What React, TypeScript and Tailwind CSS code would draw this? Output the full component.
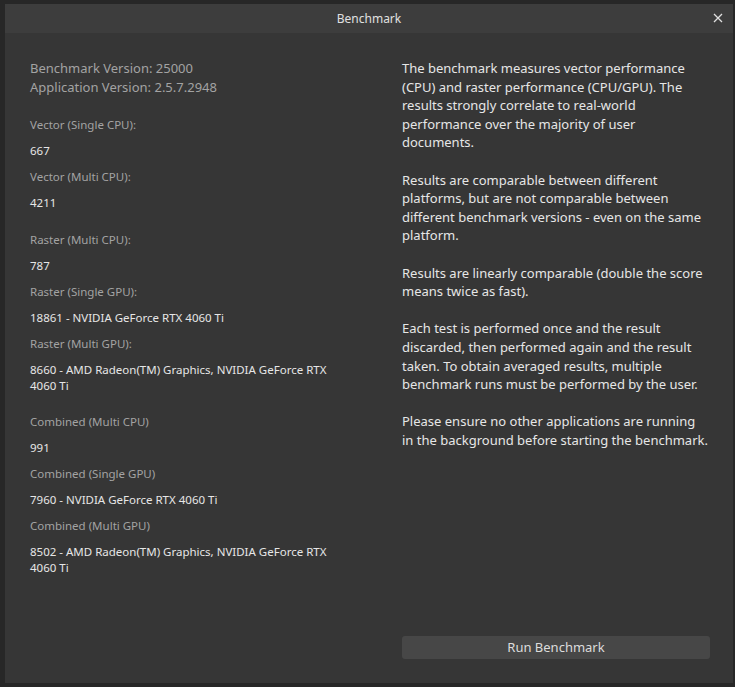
import React from "react";

const font = { fontFamily: '"Noto Sans", "Open Sans", sans-serif' };

function Label({ children }: { children: React.ReactNode }) {
  return <div className="text-[11.5px] leading-[16px] text-[#a3a3a3] h-[26px] flex items-center whitespace-nowrap">{children}</div>;
}
function Value({ lines }: { lines: string[] }) {
  return (
    <div className="text-[11.5px] leading-[16px] text-[#e6e6e6] py-[5px] whitespace-nowrap">
      {lines.map((l, i) => (
        <div key={i}>{l}</div>
      ))}
    </div>
  );
}

const paras: string[][] = [
  [
    "The benchmark measures vector performance",
    "(CPU) and raster performance (CPU/GPU). The",
    "results strongly correlate to real-world",
    "performance over the majority of user",
    "documents.",
  ],
  [
    "Results are comparable between different",
    "platforms, but are not comparable between",
    "different benchmark versions - even on the same",
    "platform.",
  ],
  ["Results are linearly comparable (double the score", "means twice as fast)."],
  [
    "Each test is performed once and the result",
    "discarded, then performed again and the result",
    "taken. To obtain averaged results, multiple",
    "benchmark runs must be performed by the user.",
  ],
  ["Please ensure no other applications are running", "in the background before starting the benchmark."],
];

export default function App() {
  return (
    <div style={font} className="w-[735px] h-[687px] bg-[#272727] pl-[5px] pt-[4px] pr-[2px] pb-[4px] overflow-hidden">
      <div className="w-full h-full flex flex-col bg-[#363636]">
        <div className="h-[29px] shrink-0 bg-[#3d3d3d] relative flex items-center justify-center">
          <span className="text-[12px] text-[#e0e0e0]">Benchmark</span>
          <svg className="absolute right-[10px] top-[9px]" width="10" height="10" viewBox="0 0 10 10">
            <path d="M1 1L9 9M9 1L1 9" stroke="#e0e0e0" strokeWidth="1.3" />
          </svg>
        </div>
        <div className="flex-1 flex pl-[25px]">
          <div className="w-[372px] shrink-0 pt-[26px]">
            <div className="text-[13px] leading-[19px] text-[#a3a3a3] whitespace-nowrap">
              <div>Benchmark Version: 25000</div>
              <div>Application Version: 2.5.7.2948</div>
            </div>
            <div className="mt-[15px]">
              <Label>Vector (Single CPU):</Label>
              <Value lines={["667"]} />
              <Label>Vector (Multi CPU):</Label>
              <Value lines={["4211"]} />
            </div>
            <div className="mt-[11px]">
              <Label>Raster (Multi CPU):</Label>
              <Value lines={["787"]} />
              <Label>Raster (Single GPU):</Label>
              <Value lines={["18861 - NVIDIA GeForce RTX 4060 Ti"]} />
              <Label>Raster (Multi GPU):</Label>
              <Value lines={["8660 - AMD Radeon(TM) Graphics, NVIDIA GeForce RTX", "4060 Ti"]} />
            </div>
            <div className="mt-[10px]">
              <Label>Combined (Multi CPU)</Label>
              <Value lines={["991"]} />
              <Label>Combined (Single GPU)</Label>
              <Value lines={["7960 - NVIDIA GeForce RTX 4060 Ti"]} />
              <Label>Combined (Multi GPU)</Label>
              <Value lines={["8502 - AMD Radeon(TM) Graphics, NVIDIA GeForce RTX", "4060 Ti"]} />
            </div>
          </div>
          <div className="w-[308px] shrink-0 flex flex-col pt-[26px] pb-[24px]">
            <div className="text-[13px] leading-[18.6px] text-[#e6e6e6] flex flex-col gap-[18.6px]">
              {paras.map((p, i) => (
                <div key={i} className="whitespace-nowrap">
                  {p.map((l, j) => (
                    <div key={j}>{l}</div>
                  ))}
                </div>
              ))}
            </div>
            <div className="flex-1" />
            <button className="h-[23px] w-full rounded-[3px] bg-[#474747] text-[13px] text-[#dcdcdc] flex items-center justify-center">
              Run Benchmark
            </button>
          </div>
        </div>
      </div>
    </div>
  );
}
